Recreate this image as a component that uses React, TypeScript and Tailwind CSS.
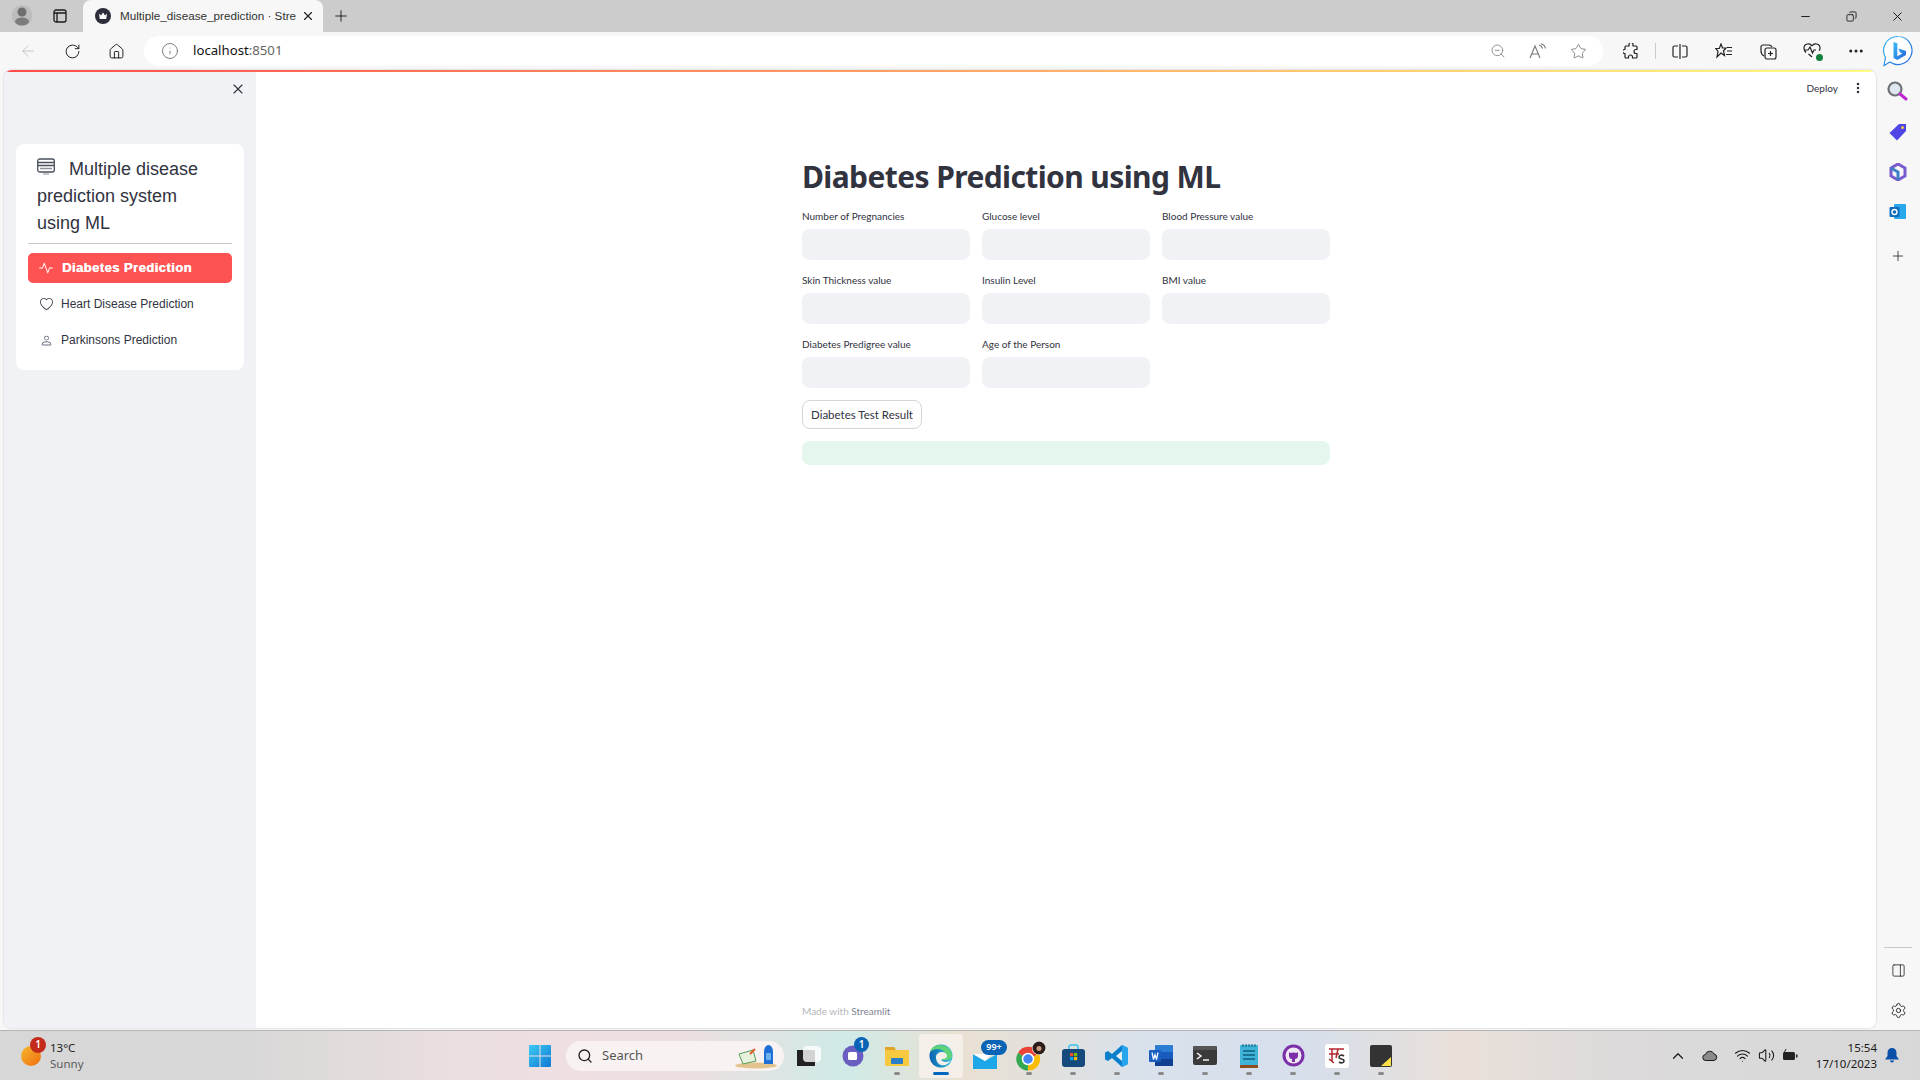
import React from "react";
import {
  ArrowLeft,
  ChevronUp,
  Copy,
  EllipsisVertical,
  Home,
  Info,
  Minus,
  MoreHorizontal,
  PanelRight,
  Plus,
  RotateCw,
  Search,
  Settings,
  Star,
  Volume2,
  Wifi,
  X,
  ZoomOut,
} from "lucide-react";
import { BsActivity, BsHeart, BsPerson } from "react-icons/bs";

const Slot: React.FC<{ className?: string; children?: React.ReactNode }> = ({ className, children }) => (
  <div className={`flex h-full shrink-0 items-center justify-center ${className ?? "w-[44px]"}`}>{children}</div>
);

const TabStrip = () => (
  <div className="flex h-[32px] shrink-0 items-end bg-[#cccccc]">
    <Slot className="w-[44px]">
      <svg width="22" height="24" viewBox="0 0 22 24">
        <circle cx="11" cy="11.500" r="10.500" fill="#bdbdbd" />
        <circle cx="11" cy="8" r="4.500" fill="#6f6f6f" />
        <ellipse cx="11" cy="17.500" rx="7" ry="4" fill="#7c7c7c" />
      </svg>
    </Slot>
    <Slot className="w-[32px]">
      <svg width="14" height="14" viewBox="0 0 14 14" fill="none" stroke="#1a1a1a" strokeWidth="1.300">
        <rect x="1" y="1" width="12" height="12" rx="2" />
        <path d="M1 4h12M4 4v9" />
      </svg>
    </Slot>
    <div className="ml-[7px] flex h-full w-[240px] items-center rounded-t-lg bg-[#f7f7f7] pl-[12px]">
      <svg width="16" height="16" viewBox="0 0 16 16" className="shrink-0">
        <circle cx="8" cy="8" r="8" fill="#2b2d3a" />
        <path d="M4 5.500l2 2 2-3 2 3 2-2-.8 5.500H4.800z" fill="#fff" />
      </svg>
      <span className="ml-[9px] w-[175px] whitespace-nowrap text-[11.700px] text-[#333]">
        Multiple_disease_prediction · Stre
      </span>
      <X size={14} className="ml-[6px] shrink-0 text-[#222]" />
    </div>
    <Slot className="w-[36px]">
      <Plus size={18} strokeWidth={1.300} className="text-[#222]" />
    </Slot>
    <div className="ml-auto flex h-full">
      <Slot className="w-[46px]">
        <Minus size={13} strokeWidth={1.700} className="text-[#111]" />
      </Slot>
      <Slot className="w-[46px]">
        <Copy size={11} strokeWidth={1.800} className="-scale-x-100 text-[#111]" />
      </Slot>
      <Slot className="w-[46px]">
        <X size={15} strokeWidth={1.500} className="text-[#111]" />
      </Slot>
    </div>
  </div>
);

const BingBubble = () => (
  <svg width="32" height="32" viewBox="0 0 32 32">
    <defs>
      <linearGradient id="bingB" x1="0" y1="0" x2="1" y2="1">
        <stop offset="0" stopColor="#37bdf5" />
        <stop offset="1" stopColor="#2563d8" />
      </linearGradient>
    </defs>
    <path d="M16 1.500a14 14 0 1 1-8 25.500l-6 3.500 1.500-8A14 14 0 0 1 16 1.500z" fill="#fff" stroke="url(#bingB)" strokeWidth="1.200" />
    <path d="M11.500 7l3.800 1.300v13l5-2.800-2.400-1.200-1.500-3.800 7.600 2.600v3.900l-8.700 5-3.800-2.100z" fill="url(#bingB)" />
  </svg>
);

const Toolbar = () => (
  <div className="flex h-[38px] shrink-0 items-start bg-[#f7f7f7] pl-[6px] pt-[4px]">
    <div className="flex h-[30px]">
      <Slot>
        <ArrowLeft size={18} strokeWidth={1.200} className="text-[#c0c0c0]" />
      </Slot>
      <Slot>
        <RotateCw size={17} strokeWidth={1.400} className="text-[#222]" />
      </Slot>
      <Slot>
        <Home size={17} strokeWidth={1.400} className="text-[#222]" />
      </Slot>
    </div>
    <div className="ml-[6px] flex h-[30px] w-[1459px] items-center rounded-full bg-white pl-[17px] pr-[5px]">
      <Info size={18} strokeWidth={1.100} className="text-[#666]" />
      <span className="ml-[14px] font-['Noto_Sans',sans-serif] text-[13.200px] text-[#111]">
        localhost<span className="text-[#666]">:8501</span>
      </span>
      <div className="ml-auto flex h-full">
        <Slot className="w-[40px]">
          <ZoomOut size={16} strokeWidth={1.200} className="text-[#777]" />
        </Slot>
        <Slot className="w-[40px]">
          <svg width="18" height="17" viewBox="0 0 18 17" fill="none" stroke="#777" strokeWidth="1.100">
            <path d="M1 15L6 3l5 12M3 11h6" />
            <path d="M10 2c2 .5 3 1.500 3.500 3.500M12 0.800c2.500.7 4 2.200 4.500 4.700" />
          </svg>
        </Slot>
        <Slot className="w-[40px]">
          <Star size={17} strokeWidth={1.200} className="text-[#777]" />
        </Slot>
      </div>
    </div>
    <div className="ml-[6px] flex h-[30px] items-center">
      <Slot>
        <svg width="16" height="16" viewBox="0 0 16 16" fill="none" stroke="#222" strokeWidth="1.200" strokeLinejoin="round">
          <path d="M6 1.500a2 2 0 0 1 4 0V3h3a1 1 0 0 1 1 1v2.500h-1a2 2 0 0 0 0 4h1V14a1 1 0 0 1-1 1H9.500v-1a2 2 0 0 0-4 0v1H3a1 1 0 0 1-1-1v-3.500H1.500a2 2 0 0 1 0-4H2V4a1 1 0 0 1 1-1h3z" />
        </svg>
      </Slot>
      <div className="ml-[2px] h-[16px] w-px bg-[#c9c9c9]" />
      <Slot className="ml-[2px] w-[44px]">
        <svg width="16" height="15" viewBox="0 0 16 15" fill="none" stroke="#222" strokeWidth="1.200">
          <path d="M6 2H2.500A1.500 1.500 0 0 0 1 3.500v8A1.500 1.500 0 0 0 2.500 13H6M10 2h3.500A1.500 1.500 0 0 1 15 3.500v8a1.500 1.500 0 0 1-1.500 1.500H10M8 0v15" />
        </svg>
      </Slot>
      <Slot>
        <svg width="18" height="16" viewBox="0 0 18 16" fill="none" stroke="#222" strokeWidth="1.200">
          <path d="M6 1l1.500 4H11L8.500 8l1 4.500L6 10l-4 4 1-5.500L0.800 5.500h3.500zM12 4.500h5M12 8h5M11 11.500h6" />
        </svg>
      </Slot>
      <Slot>
        <svg width="17" height="17" viewBox="0 0 17 17" fill="none" stroke="#222" strokeWidth="1.200">
          <rect x="5" y="5" width="11" height="11" rx="2" />
          <path d="M10.500 8v5M8 10.500h5M4 13C2 12 1 10 1 8V4a2 2 0 0 1 2-2h6c1.500 0 2.500 1 3 2" />
        </svg>
      </Slot>
      <Slot>
        <div className="relative">
          <svg width="18" height="16" viewBox="0 0 18 16" fill="none" stroke="#222" strokeWidth="1.200">
            <path d="M9 3C7-.5 1 .5 1 5c0 2 1 3.500 2 4.500M9 3c2-3.500 8-2.500 8 2 0 1-.3 2-.8 2.800M1 7h4l2-3 2.500 6 1.500-3h2M5.500 11L9 14" />
          </svg>
          <div className="absolute -bottom-[2px] -right-[2px] h-[7px] w-[7px] rounded-full bg-[#15803d]" />
        </div>
      </Slot>
      <Slot>
        <MoreHorizontal size={18} className="text-[#222]" />
      </Slot>
      <Slot className="w-[40px]">
        <BingBubble />
      </Slot>
    </div>
  </div>
);

const TitleIcon = () => (
  <svg width="18" height="18" viewBox="0 0 18 18" fill="none" className="mr-[14px] inline-block align-[-1px]">
    <rect x="0.700" y="1" width="16.600" height="13" rx="2" stroke="#4a4f5c" strokeWidth="1.300" />
    <path d="M1 4.500h16M1 7.500h16" stroke="#4a4f5c" strokeWidth="1.300" />
    <path d="M3 10.500h12" stroke="#8a8f99" strokeWidth="1.300" />
    <path d="M6 16h6" stroke="#8a8f99" strokeWidth="1.200" />
  </svg>
);

const navItems = [
  { label: "Heart Disease Prediction", icon: <BsHeart size={13} className="text-[#3b3f4a]" /> },
  { label: "Parkinsons Prediction", icon: <BsPerson size={13} className="text-[#6b7080]" /> },
];

const Sidebar = () => (
  <aside className="flex w-[252px] shrink-0 flex-col bg-[#f0f2f6] pb-[2px] pl-[12px] pr-[12px] pt-[9px] font-['Liberation_Sans',sans-serif]">
    <div className="-mr-[2px] flex justify-end">
      <X size={16} strokeWidth={1.700} className="text-[#31333f]" />
    </div>
    <div className="mt-[47px] rounded-lg bg-white px-[12px] pb-[15px] pt-[12px]">
      <h2 className="pl-[9px] pr-[22px] text-[18px] font-normal leading-[27px] text-[#31333f]">
        <TitleIcon />
        Multiple disease prediction system using ML
      </h2>
      <div className="mt-[6px] h-px bg-[#c9c9c9]" />
      <nav className="mt-[9px] flex flex-col gap-[6px]">
        <a className="flex h-[30px] items-center gap-[9px] rounded-[5px] bg-[#ff5252] pl-[11px] text-[13px] font-bold tracking-[0.45px] text-white [text-shadow:0.4px_0_0_#fff]">
          <BsActivity size={14} />
          Diabetes Prediction
        </a>
        {navItems.map((item) => (
          <a key={item.label} className="flex h-[30px] items-center gap-[8px] pl-[11px] text-[12px] text-[#31333f]">
            <span className="flex w-[14px] justify-center">{item.icon}</span>
            {item.label}
          </a>
        ))}
      </nav>
    </div>
  </aside>
);

const fields = [
  "Number of Pregnancies",
  "Glucose level",
  "Blood Pressure value",
  "Skin Thickness value",
  "Insulin Level",
  "BMI value",
  "Diabetes Predigree value",
  "Age of the Person",
];

const MainArea = () => (
  <main className="flex min-w-0 flex-1 flex-col bg-white font-['Lato',sans-serif] text-[#31333f]">
    <header className="flex h-[32px] shrink-0 items-center justify-end pr-[8px]">
      <span className="text-[10px]">Deploy</span>
      <span className="ml-[10px] flex w-[20px] justify-center">
        <EllipsisVertical size={14} strokeWidth={2.400} />
      </span>
    </header>
    <div className="mx-auto w-[528px]">
      <h1 className="mt-[51px] h-[44px] whitespace-nowrap font-['Noto_Sans',sans-serif] text-[30px] font-bold leading-[44px] tracking-[-0.6px]">
        Diabetes Prediction using ML
      </h1>
      <div className="mt-[9px] grid grid-cols-3 gap-x-[12px] gap-y-[12px]">
        {fields.map((label) => (
          <label key={label} className="block">
            <span className="block h-[16px] text-[10px] leading-[16px]">{label}</span>
            <input type="text" className="mt-[5px] block h-[31px] w-full rounded-lg bg-[#f0f2f6] outline-none" />
          </label>
        ))}
      </div>
      <button className="mt-[12px] h-[29px] w-[120px] rounded-lg border border-[#d3d5da] bg-white pt-px text-[11.500px]">
        Diabetes Test Result
      </button>
      <div className="mt-[12px] h-[24px] rounded-lg bg-[#e5f7ed]" />
    </div>
    <footer className="mx-auto mt-auto w-[528px] pb-[9px] text-[10px] leading-[16px] text-[#b5b6bb]">
      Made with <span className="text-[#808495]">Streamlit</span>
    </footer>
  </main>
);

const SideRail = () => (
  <div className="flex w-[44px] shrink-0 flex-col items-center">
    <svg width="22" height="22" viewBox="0 0 22 22" fill="none" className="mt-[10px] -translate-x-[1px]">
      <circle cx="9" cy="9" r="6.500" stroke="#6f7276" strokeWidth="2.200" fill="#dfe8ee" />
      <path d="M14 14l6 5" stroke="#c026d3" strokeWidth="3" strokeLinecap="round" />
    </svg>
    <svg width="18" height="18" viewBox="0 0 18 18" className="mt-[21px]">
      <path d="M10 1h7v7l-9 9.500L0.500 10z" fill="#4f46e5" />
      <circle cx="13.500" cy="4.500" r="1.500" fill="#f5c542" />
    </svg>
    <svg width="18" height="18" viewBox="0 0 18 18" className="mt-[22px]">
      <path d="M9 1l7 4v8l-7 4-7-4V5z" fill="none" stroke="#7a5ad0" strokeWidth="3" />
      <path d="M2 5l7 4v8" fill="none" stroke="#3b82c4" strokeWidth="3" />
    </svg>
    <svg width="18" height="18" viewBox="0 0 18 18" className="mt-[22px]">
      <rect x="5" y="1" width="12" height="15" rx="1" fill="#28a8ea" />
      <rect x="0.500" y="4" width="10" height="10" rx="1" fill="#0f6cbd" />
      <circle cx="5.500" cy="9" r="2.500" fill="none" stroke="#fff" strokeWidth="1.400" />
    </svg>
    <Plus size={16} strokeWidth={1.200} className="mt-[27px] text-[#222]" />
    <div className="mt-auto h-px w-[28px] bg-[#c9c9c9]" />
    <PanelRight size={15} strokeWidth={1.300} className="mt-[15px] text-[#222]" />
    <Settings size={17} strokeWidth={1.300} className="mb-[11px] mt-[24px] text-[#222]" />
  </div>
);

const Stub = ({ active, children }: { active?: boolean; children: React.ReactNode }) => (
  <div className={`relative flex h-[44px] w-[44px] shrink-0 items-center justify-center ${active ? "rounded bg-[#f5efe9]" : ""}`}>
    {children}
    <div className={`absolute bottom-[3px] h-[3px] rounded-full ${active ? "w-[16px] bg-[#0067c0]" : "w-[6px] bg-[#8a8a8a]"}`} />
  </div>
);

const Plain = ({ children }: { children: React.ReactNode }) => (
  <div className="relative flex h-[44px] w-[44px] shrink-0 items-center justify-center">{children}</div>
);

const Badge = ({ text, className }: { text: string; className: string }) => (
  <span className={`absolute flex items-center justify-center rounded-full font-['Noto_Sans',sans-serif] font-semibold text-white ${className}`}>
    {text}
  </span>
);

const Taskbar = () => (
  <div className="flex h-[50px] shrink-0 items-center border-t border-[#b5b5b5] bg-[linear-gradient(90deg,#d7d7d7_0%,#d7d7d7_12%,#ebdfdf_24%,#efdfe3_30%,#ecdfe0_36%,#cfeae7_44%,#e9e0d2_50%,#d8e1ec_60%,#d6dfeb_68%,#eae0d9_76%,#dcdada_84%,#d8d8d8_100%)] font-['Noto_Sans',sans-serif]">
    <div className="flex w-[518px] shrink-0 items-center pl-[21px]">
      <div className="relative h-[20px] w-[20px] rounded-full bg-[linear-gradient(135deg,#f5b92c,#ef6c11)]">
        <Badge text="1" className="-right-[5px] -top-[9px] h-[16px] w-[16px] bg-[#c42b1c] text-[10px]" />
      </div>
      <div className="ml-[9px] text-[11.500px] leading-[16px]">
        <div className="text-[#1a1a1a]">13°C</div>
        <div className="text-[#5c5c5c]">Sunny</div>
      </div>
    </div>
    <Plain>
      <svg width="24" height="24" viewBox="0 0 24 24">
        <defs>
          <linearGradient id="winG" x1="0" y1="0" x2="1" y2="1">
            <stop offset="0" stopColor="#3ccbf4" />
            <stop offset="1" stopColor="#0f78d4" />
          </linearGradient>
        </defs>
        <path d="M1 2a1 1 0 0 1 1-1h9.500v10.500H1zM12.500 1H22a1 1 0 0 1 1 1v9.500H12.500zM1 12.500h10.500V23H2a1 1 0 0 1-1-1zM12.500 12.500H23V22a1 1 0 0 1-1 1h-9.500z" fill="url(#winG)" />
      </svg>
    </Plain>
    <div className="ml-[4px] flex h-[30px] w-[218px] shrink-0 items-center rounded-full bg-[#f8f3f2] pl-[11px]">
      <Search size={16} strokeWidth={2} className="text-[#222]" />
      <span className="ml-[9px] text-[13px] text-[#555]">Search</span>
      <svg width="44" height="26" viewBox="0 0 44 26" className="ml-auto mr-[5px]">
        <ellipse cx="21" cy="22.500" rx="21" ry="3" fill="#e3c48e" />
        <path d="M4 11l14-4 3 11-13 3z" fill="#e6f2dc" stroke="#5a9a5a" />
        <path d="M15 11l5-5" stroke="#e25b2b" strokeWidth="2" />
        <path d="M29 21V9c0-4 2-7 4.500-7S38 5 38 9v12z" fill="#1f6fd6" />
        <rect x="31" y="10" width="5" height="7" rx="1" fill="#6fb2f2" />
      </svg>
    </div>
    <div className="ml-[3px] flex">
      <Plain>
        <div className="relative h-[20px] w-[24px]">
          <div className="absolute bottom-0 left-0 h-[16px] w-[18px] bg-[#222]" />
          <div className="absolute right-0 top-0 h-[16px] w-[18px] rounded-sm bg-white/80" />
        </div>
      </Plain>
      <Plain>
        <svg width="22" height="22" viewBox="0 0 22 22">
          <circle cx="11" cy="11" r="10.500" fill="#6a5fc1" />
          <rect x="6" y="7" width="9" height="8" rx="1.500" fill="#fff" />
        </svg>
        <Badge text="1" className="right-[6px] top-[3px] h-[15px] w-[15px] bg-[#0a63b5] text-[10px]" />
      </Plain>
      <Stub>
        <svg width="24" height="22" viewBox="0 0 24 22">
          <path d="M0 2h9l2 3h13v16H0z" fill="#f7c93e" />
          <path d="M0 2h9l2 3H0z" fill="#e0a526" />
          <rect x="6" y="13" width="12" height="6" rx="1" fill="#2a7fc7" />
        </svg>
      </Stub>
      <Stub active>
        <svg width="24" height="24" viewBox="0 0 24 24">
          <defs>
            <linearGradient id="edgeG" x1="0" y1="0" x2="1" y2="0">
              <stop offset="0" stopColor="#0b62b0" />
              <stop offset="1" stopColor="#32c4dc" />
            </linearGradient>
          </defs>
          <circle cx="12" cy="12" r="11.500" fill="url(#edgeG)" />
          <path d="M10 1c6 0 13 3 13 11 0 3-3 4-6 4H9c0-5 5-7 8-5-1-5-9-9-16-3 1-4 5-7 9-7z" fill="#5fd37a" />
          <path d="M7 13c0-3 3-5 6-5s5 2 5 4-2 3-5 3c-2 0 0 3 4 3 2 0 4-1 5-2-2 4-6 6-10 5-3-1-5-4-5-8z" fill="#f5efe9" />
        </svg>
      </Stub>
      <Plain>
        <svg width="24" height="16" viewBox="0 0 24 16" className="mt-[10px]">
          <path d="M0 1l12 7 12-7v15H0z" fill="#1ea7e8" />
          <path d="M0 1h18l-6 7z" fill="#ffffff" />
        </svg>
        <Badge text="99+" className="left-[18px] top-[6px] h-[15px] w-[26px] bg-[#0a63b5] text-[9px]" />
      </Plain>
      <Stub>
        <svg width="32" height="30" viewBox="0 0 32 30" className="ml-[4px]">
          <g transform="translate(1 6)">
            <path d="M12 12L2 6a11.500 11.500 0 0 1 21 1z" fill="#ea4335" />
            <path d="M12 12l11-5a11.500 11.500 0 0 1-11 16.500z" fill="#fbbc05" />
            <path d="M12 23.500A11.500 11.500 0 0 1 2 6l10 6z" fill="#34a853" />
            <circle cx="12" cy="12" r="5.500" fill="#4285f4" stroke="#fff" strokeWidth="1.500" />
          </g>
          <circle cx="24" cy="7" r="7" fill="#fff" />
          <circle cx="24" cy="7" r="6.500" fill="#2b1d1a" />
          <circle cx="24" cy="7.500" r="2.500" fill="#c99a80" />
        </svg>
      </Stub>
      <Stub>
        <svg width="23" height="23" viewBox="0 0 23 23">
          <path d="M7 5V3a2 2 0 0 1 2-2h5a2 2 0 0 1 2 2v2" fill="none" stroke="#3cc3e8" strokeWidth="1.500" />
          <rect x="0" y="5" width="23" height="18" rx="3" fill="#174a7c" />
          <rect x="8" y="9" width="3.200" height="3.200" fill="#f25022" />
          <rect x="12" y="9" width="3.200" height="3.200" fill="#7fba00" />
          <rect x="8" y="13" width="3.200" height="3.200" fill="#00a4ef" />
          <rect x="12" y="13" width="3.200" height="3.200" fill="#ffb900" />
        </svg>
      </Stub>
      <Stub>
        <svg width="24" height="24" viewBox="0 0 24 24">
          <path d="M17 1l6 3v16l-6 3L7 14l-4 3-3-1.500V8.500L3 7l4 3z" fill="#0a7fcc" />
          <path d="M17 7v10l-6-5z" fill="#e5eef7" />
          <path d="M17 1l6 3v16l-6 3z" fill="#26a6ef" />
        </svg>
      </Stub>
      <Stub>
        <svg width="24" height="22" viewBox="0 0 24 22">
          <rect x="6" y="0" width="18" height="21" rx="1" fill="#2b7cd3" />
          <rect x="6" y="7" width="18" height="7" fill="#185abd" />
          <rect x="6" y="14" width="18" height="7" fill="#103f91" />
          <rect x="0" y="5" width="12" height="12" rx="1" fill="#1a5fc0" />
          <path d="M2 7.500l1.500 7 1.500-5 1.500 5 1.500-7" transform="translate(1)" fill="none" stroke="#fff" strokeWidth="1.200" />
        </svg>
      </Stub>
      <Stub>
        <svg width="24" height="19" viewBox="0 0 24 19">
          <rect width="24" height="19" rx="2" fill="#3a3a3a" />
          <rect width="24" height="4" rx="1" fill="#555" />
          <path d="M4 7l4 3-4 3" fill="none" stroke="#fff" strokeWidth="1.400" />
          <path d="M10 14h6" stroke="#fff" strokeWidth="1.400" />
        </svg>
      </Stub>
      <Stub>
        <svg width="18" height="24" viewBox="0 0 18 24">
          <rect y="1" width="18" height="20" rx="1" fill="#3fb4d8" />
          <path d="M3 7h12M3 11h12M3 15h12" stroke="#115e7c" strokeWidth="1.500" />
          <path d="M3 0v3M6 0v3M9 0v3M12 0v3M15 0v3" stroke="#115e7c" />
          <rect y="21" width="18" height="3" fill="#8f4e1f" />
        </svg>
      </Stub>
      <Stub>
        <svg width="23" height="23" viewBox="0 0 23 23">
          <circle cx="11.500" cy="11.500" r="11" fill="#7b2fa8" />
          <circle cx="11.500" cy="11.500" r="8" fill="#f0e8f5" />
          <path d="M7 8l1.500 1c2-.7 4-.7 6 0L16 8v4c0 2-1.500 3-3 3v3h-3v-3c-1.500 0-3-1-3-3z" fill="#7b2fa8" />
        </svg>
      </Stub>
      <Stub>
        <svg width="24" height="24" viewBox="0 0 24 24">
          <rect width="24" height="24" rx="3" fill="#fff" />
          <path d="M4 5h15M4 10h10M7 5v13M13 5l-2 9M4 15l5 4" stroke="#b3262c" strokeWidth="1.500" fill="none" />
          <path d="M19 12c-2-1.500-5-1-5 1 0 3 5 1 5 4 0 2-3 2.500-5 1" stroke="#333" strokeWidth="1.600" fill="none" />
        </svg>
      </Stub>
      <Stub>
        <svg width="22" height="22" viewBox="0 0 22 22">
          <rect width="22" height="22" rx="2" fill="#333" />
          <path d="M11 21l10-9v9z" fill="#fde047" />
        </svg>
      </Stub>
    </div>
    <div className="ml-auto flex items-center text-[#1a1a1a]">
      <ChevronUp size={18} strokeWidth={1.600} />
      <svg width="16" height="11" viewBox="0 0 16 11" className="ml-[15px]">
        <path d="M4 10.500a3 3 0 0 1-.5-6 4.500 4.500 0 0 1 8.500-.5 3.300 3.300 0 0 1 0 6.500z" fill="#8a8a8a" stroke="#1a1a1a" />
      </svg>
      <Wifi size={17} strokeWidth={1.500} className="ml-[16px]" />
      <Volume2 size={17} strokeWidth={1.500} className="ml-[7px]" />
      <svg width="16" height="13" viewBox="0 0 16 13" className="ml-[7px]">
        <rect x="1" y="3" width="12" height="8" rx="1.500" fill="#222" />
        <rect x="14" y="5.500" width="1.500" height="3" fill="#222" />
        <path d="M4 0l-2 4h2l-1 3" stroke="#222" fill="none" />
      </svg>
      <div className="ml-[18px] text-right text-[11.500px] leading-[16px]">
        <div>15:54</div>
        <div>17/10/2023</div>
      </div>
      <svg width="14" height="15" viewBox="0 0 14 15" className="ml-[8px] mr-[21px]">
        <path d="M7 0a4.500 4.500 0 0 1 4.500 4.500V8L14 11.500H0L2.500 8V4.500A4.500 4.500 0 0 1 7 0zM5 12.500h4a2 2 0 0 1-4 0z" fill="#0a50a8" />
      </svg>
    </div>
  </div>
);

export default function App() {
  return (
    <div className="flex h-[1080px] w-[1920px] flex-col overflow-hidden bg-[#f7f7f7] font-['Liberation_Sans',sans-serif]">
      <TabStrip />
      <Toolbar />
      <div className="flex min-h-0 flex-1">
        <div className="mb-[2px] ml-[4px] flex min-w-0 flex-1 flex-col overflow-hidden rounded-lg bg-white shadow-[0_0_2px_rgba(0,0,0,0.25)]">
          <div className="h-[2px] shrink-0 bg-[linear-gradient(90deg,#ff4b4b,#fffd80)]" />
          <div className="flex min-h-0 flex-1">
            <Sidebar />
            <MainArea />
          </div>
        </div>
        <SideRail />
      </div>
      <Taskbar />
    </div>
  );
}
